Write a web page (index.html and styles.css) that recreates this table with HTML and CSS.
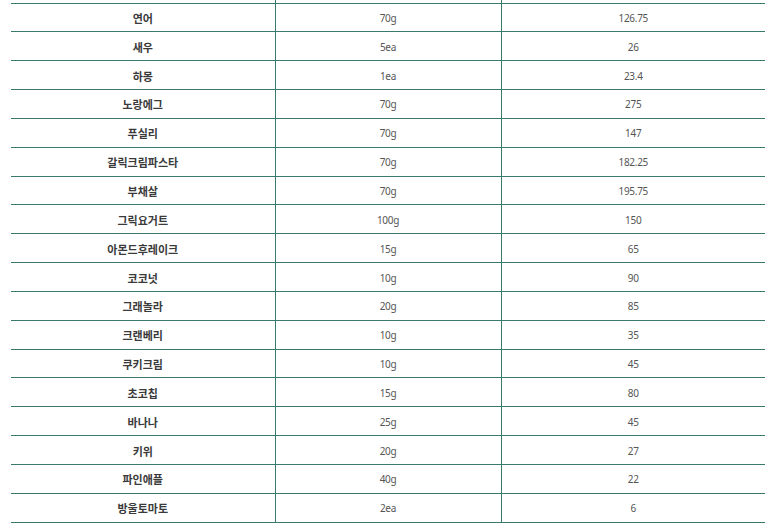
FILE: index.html
```html
<!DOCTYPE html>
<html lang="ko">
<head>
<meta charset="utf-8">
<link rel="stylesheet" href="styles.css">
</head>
<body>
<table class="menu">
  <colgroup><col class="c1"><col class="c2"><col class="c3"></colgroup>
  <tr class="top"><td></td><td></td><td></td></tr>
  <tr><th>연어</th><td>70g</td><td>126.75</td></tr>
  <tr><th>새우</th><td>5ea</td><td>26</td></tr>
  <tr><th>하몽</th><td>1ea</td><td>23.4</td></tr>
  <tr><th>노랑에그</th><td>70g</td><td>275</td></tr>
  <tr><th>푸실리</th><td>70g</td><td>147</td></tr>
  <tr><th>갈릭크림파스타</th><td>70g</td><td>182.25</td></tr>
  <tr><th>부채살</th><td>70g</td><td>195.75</td></tr>
  <tr><th>그릭요거트</th><td>100g</td><td>150</td></tr>
  <tr><th>아몬드후레이크</th><td>15g</td><td>65</td></tr>
  <tr><th>코코넛</th><td>10g</td><td>90</td></tr>
  <tr><th>그래놀라</th><td>20g</td><td>85</td></tr>
  <tr><th>크랜베리</th><td>10g</td><td>35</td></tr>
  <tr><th>쿠키크림</th><td>10g</td><td>45</td></tr>
  <tr><th>초코칩</th><td>15g</td><td>80</td></tr>
  <tr><th>바나나</th><td>25g</td><td>45</td></tr>
  <tr><th>키위</th><td>20g</td><td>27</td></tr>
  <tr><th>파인애플</th><td>40g</td><td>22</td></tr>
  <tr><th>방울토마토</th><td>2ea</td><td>6</td></tr>
</table>
</body>
</html>
```
FILE: styles.css
```css
html, body {
  margin: 0;
  padding: 0;
  background: #ffffff;
}
body {
  padding: 0 8px 0 11px;
}
.menu {
  width: 754px;
  border-collapse: collapse;
  table-layout: fixed;
  font-family: "Noto Sans CJK KR", "Noto Sans", sans-serif;
}
.c1 { width: 264px; }
.c2 { width: 226px; }
.c3 { width: 264px; }
.menu tr { height: 28.85px; }
.menu tr.top { height: 3px; }
.menu tr.top td { border-bottom: 1px solid #3a7a6c; padding: 0; }
.menu th, .menu td {
  padding: 1px 0 0;
  text-align: center;
  vertical-align: middle;
  border-bottom: 1px solid #3a7a6c;
}
.menu th {
  font-size: 11px;
  font-weight: 700;
  color: #3a3a3a;
}
.menu td {
  font-family: "Noto Sans", "Noto Sans CJK KR", sans-serif;
  font-size: 10px;
  color: #555555;
  letter-spacing: -0.3px;
}
.menu td:nth-child(2) {
  border-left: 1px solid #3a7a6c;
  border-right: 1px solid #3a7a6c;
}
```
